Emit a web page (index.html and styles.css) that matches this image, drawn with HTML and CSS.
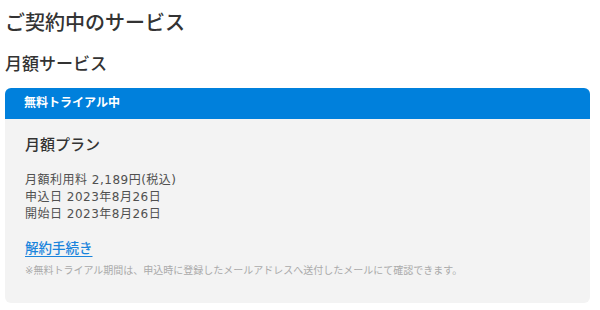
FILE: index.html
```html
<!DOCTYPE html>
<html lang="ja">
<head>
  <meta charset="UTF-8">
  <title>ご契約中のサービス</title>
  <link rel="stylesheet" href="styles.css">
</head>
<body>

<h1 class="pageTitle">ご契約中のサービス</h1>
<h2 class="sectionTitle">月額サービス</h2>

<!-- 契約カード -->
<div class="planCard">
  <div class="planStatus">無料トライアル中</div>
  <div class="planBody">
    <h3 class="planName">月額プラン</h3>
    <ul class="planInfo">
      <li>月額利用料 2,189円(税込)</li>
      <li>申込日 2023年8月26日</li>
      <li>開始日 2023年8月26日</li>
    </ul>
    <a href="#" class="cancelLink">解約手続き</a>
    <p class="planNote">※無料トライアル期間は、申込時に登録したメールアドレスへ送付したメールにて確認できます。</p>
  </div>
</div>

</body>
</html>
```

FILE: styles.css
```css
* {
  box-sizing: border-box;
}
body {
  margin: 0;
  padding: 0 10px 0 5px;
  font-family: "DejaVu Sans", "Noto Sans CJK JP", sans-serif;
  background: #fff;
  color: #333;
}
.pageTitle {
  margin: 8px 0 0;
  font-size: 20px;
  font-weight: 500;
  line-height: 30px;
}
.sectionTitle {
  margin: 13px 0 0;
  font-size: 17px;
  font-weight: 500;
  line-height: 26px;
}
/* カード */
.planCard {
  margin-top: 11px;
  border-radius: 6px;
  overflow: hidden;
  background: #f3f3f3;
}
.planStatus {
  background: #0080dc;
  color: #fff;
  font-size: 12px;
  font-weight: 700;
  line-height: 31px;
  padding: 0 19px;
}
.planBody {
  padding: 14px 20px 24px;
}
.planName {
  margin: 0;
  font-size: 15px;
  font-weight: 500;
  line-height: 24px;
}
.planInfo {
  list-style: none;
  margin: 15px 0 0;
  padding: 0;
  font-size: 12px;
  line-height: 17px;
  color: #505050;
  letter-spacing: 0.5px;
}
.cancelLink {
  display: inline-block;
  margin-top: 15px;
  font-size: 13.5px;
  font-weight: 500;
  line-height: 20px;
  color: #1a84dc;
  text-decoration: underline;
  text-underline-offset: 3px;
}
.planNote {
  margin: 5px 0 0;
  font-size: 10px;
  line-height: 16px;
  color: #aaa;
}
```
